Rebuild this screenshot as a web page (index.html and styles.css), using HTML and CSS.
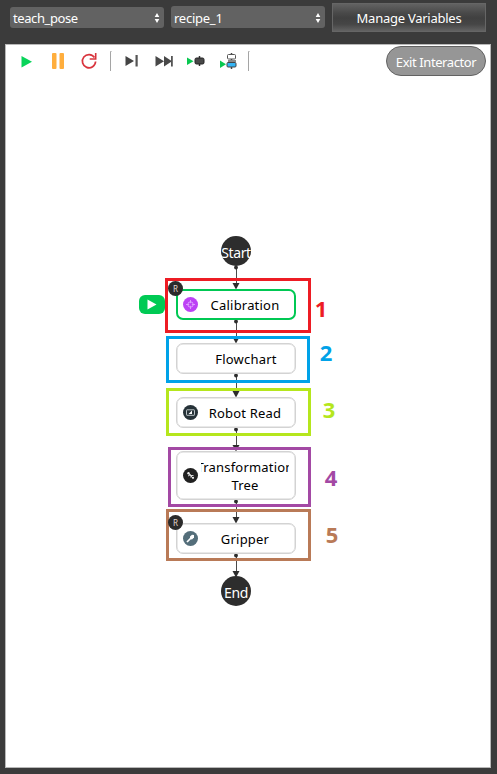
FILE: index.html
```html
<!DOCTYPE html>
<html lang="en">
<head>
<meta charset="utf-8">
<title>Interactor</title>
<link rel="stylesheet" href="styles.css">
</head>
<body>
<header class="topbar">
  <div class="select select-task"><span>teach_pose</span><svg width="6" height="10" viewBox="0 0 6 10"><path d="M3 0L5.3 4H.7zM3 10L.7 6h4.6z"/></svg></div>
  <div class="select select-recipe"><span>recipe_1</span><svg width="6" height="10" viewBox="0 0 6 10"><path d="M3 0L5.3 4H.7zM3 10L.7 6h4.6z"/></svg></div>
  <button class="manage">Manage Variables</button>
</header>
<main class="workspace">
  <div class="toolbar">
    <svg class="tools" width="250" height="30" viewBox="0 46 250 30">
      <path d="M21.500 56v11.500l10.500-5.700z" fill="#08d45a"/>
      <rect x="52" y="53" width="4.500" height="16" rx="1" fill="#ffae3d"/><rect x="59.500" y="53" width="4.500" height="16" rx="1" fill="#ffae3d"/>
      <path d="M94.500 57.500A6.600 6.600 0 1 0 95.600 61.500" fill="none" stroke="#d9343d" stroke-width="1.700"/>
      <path d="M95.700 53v6h-6" fill="none" stroke="#d9343d" stroke-width="1.600"/>
      <path d="M110.500 71V51.500h1" fill="none" stroke="#a5a5a5"/>
      <path d="M125.500 56v10l8.500-5z" fill="#444"/><rect x="135.500" y="55" width="2.200" height="11.500" fill="#555"/>
      <path d="M155.500 56v10.500l8.500-5.300zM164 56v10.500l8-5.300z" fill="#484848"/><rect x="171" y="56" width="1.800" height="10.500" fill="#555"/>
      <path d="M187 57.500v7.500l6.500-3.700z" fill="#08c850"/>
      <path d="M199.500 56v10" stroke="#333" stroke-width="1.500"/><rect x="195" y="58" width="9" height="6" rx="1.500" fill="#484848" stroke="#222"/>
      <path d="M220 60.500v7.500l6-3.700z" fill="#08c850"/>
      <path d="M231.500 53v16" stroke="#444" stroke-width="1.500"/>
      <rect x="227.500" y="54.500" width="8" height="4.500" rx="1" fill="#fff" stroke="#555"/>
      <path d="M228 61h8" stroke="#888" stroke-width="2"/>
      <rect x="227" y="62.500" width="9" height="4.500" rx="1" fill="#35b4f4" stroke="#444"/>
      <path d="M248.500 71V51.500h1" fill="none" stroke="#a5a5a5"/>
    </svg>
    <button class="exit">Exit Interactor</button>
  </div>
  <div class="diagram">
    <svg class="wires" width="497" height="774" viewBox="0 0 497 774">
      <defs>
        <g id="head"><path d="M-3.500-6.500h7L0 0z"/></g>
      </defs>
      <path d="M236.500 266v20M236.500 321v20M236.500 375v20M236.500 429v20M236.500 501v20M236.500 555v20" stroke="#4a4a4a"/>
      <g fill="#2d2d2d">
        <use href="#head" x="236" y="289.500"/><use href="#head" x="236" y="343.500"/><use href="#head" x="236" y="397.500"/><use href="#head" x="236" y="451.500"/><use href="#head" x="236" y="523.500"/><use href="#head" x="236" y="577.500"/>
        <circle cx="236" cy="267.500" r="1.900"/><circle cx="236" cy="321.500" r="1.900"/><circle cx="236" cy="375.500" r="1.900"/><circle cx="236" cy="429.500" r="1.900"/><circle cx="236" cy="501.500" r="1.900"/><circle cx="236" cy="555.500" r="1.900"/>
      </g>
    </svg>
    <div class="terminal start"><span>Start</span></div>
    <div class="terminal end"><span>End</span></div>

    <div class="run"><svg width="26" height="19" viewBox="0 0 26 19"><path d="M8.500 4.500v10l9-5z" fill="#fff"/></svg></div>

    <div class="node calibration">
      <svg class="icon" width="15" height="15" viewBox="0 0 15 15"><circle cx="7.500" cy="7.500" r="7.500" fill="#bd42f5"/><g fill="none" stroke="#e0a5ff" stroke-width=".9"><circle cx="7.500" cy="7.500" r="2.700"/><path d="M7.500 3v3.200M7.500 8.800V12M3 7.500h3.200M8.800 7.500H12"/></g></svg>
      <span class="label">Calibration</span>
    </div>
    <div class="node flowchart"><span class="label">Flowchart</span></div>
    <div class="node robot">
      <svg class="icon" width="15" height="15" viewBox="0 0 15 15"><circle cx="7.500" cy="7.500" r="7.500" fill="#263238"/><rect x="3.500" y="4.800" width="8" height="5.500" rx=".5" fill="none" stroke="#b8c0c4"/><path d="M5.500 9L9 5.500V9z" fill="#fff"/></svg>
      <span class="label">Robot Read</span>
    </div>
    <div class="node transformation">
      <svg class="icon" width="15" height="15" viewBox="0 0 15 15"><circle cx="7.500" cy="7.500" r="7.500" fill="#212121"/><path d="M5.500 5.500l4.500 4.500M5 8l3-1.500M8 9.800V7.500h2.500" fill="none" stroke="#d8d8d8"/><g fill="#eee"><circle cx="5.500" cy="5.200" r="1.200"/><circle cx="10" cy="9.800" r="1.100"/></g></svg>
      <span class="label"><span class="clipped"><span>Transformation</span></span>Tree</span>
    </div>
    <div class="node gripper">
      <svg class="icon" width="15" height="15" viewBox="0 0 15 15"><circle cx="7.500" cy="7.500" r="7.500" fill="#546e7a"/><path d="M4 11l4-4" stroke="#fff" stroke-width="1.700"/><path d="M7 5.500L9 3.800l2 .3v2.400L9 8.500 7 8z" fill="#fff"/></svg>
      <span class="label">Gripper</span>
    </div>
    <div class="frame frame-1"></div><div class="frame frame-2"></div><div class="frame frame-3"></div><div class="frame frame-4"></div><div class="frame frame-5"></div>
    <div class="badge badge-top">R</div><div class="badge badge-bottom">R</div>
    <div class="number number-1">1</div><div class="number number-2">2</div><div class="number number-3">3</div><div class="number number-4">4</div><div class="number number-5">5</div>
  </div>
</main>
</body>
</html>
```
FILE: styles.css
```css
* { box-sizing: border-box; }
body {
  margin: 0;
  height: 774px;
  overflow: hidden;
  display: flex;
  flex-direction: column;
  background: #3b3b3b;
  font: 13px/18px "Noto Sans", "Open Sans", sans-serif;
}
button { font: inherit; padding: 0; color: #fff; }
.topbar { height: 44px; display: flex; gap: 7px; padding: 3px 11px 0 10px; align-items: flex-start; }
.select {
  width: 154px;
  display: flex;
  align-items: center;
  justify-content: space-between;
  padding: 0 4px 0 3px;
  border-radius: 3px;
  background: #626262;
  color: #fff;
  letter-spacing: -.4px;
}
.select svg { fill: #fff; }
.select-task { height: 21px; margin-top: 4px; }
.select-recipe { height: 22px; margin-top: 3px; padding-top: 1px; letter-spacing: -.25px; }
.manage {
  width: 154px;
  height: 29px;
  border: 1px solid #666;
  letter-spacing: -.25px;
  background: linear-gradient(#626262, #484848 35%, #404040 52%, #464646 75%, #626262);
}
.workspace {
  position: relative;
  width: 486px;
  height: 724px;
  margin-left: 5px;
  border: 1px solid #b8b8b8;
  background: #fff;
}
.toolbar { display: flex; justify-content: space-between; margin: 1px 4px 0 -6px; }
.exit { width: 100px; height: 30px; padding-top: 2px; border: 1px solid #626262; border-radius: 15px; background: #969696; letter-spacing: -.42px; }
.diagram { position: absolute; left: -6px; top: -45px; width: 497px; height: 774px; pointer-events: none; }
.wires { position: absolute; inset: 0; }
.terminal {
  position: absolute;
  left: 221px;
  width: 30px;
  height: 30px;
  display: flex;
  justify-content: center;
  border-radius: 50%;
  background: #2d2d2d;
  color: #fff;
  font-size: 14px;
  line-height: 33px;
}
.start { top: 236px; letter-spacing: -.4px; }
.end { top: 576px; letter-spacing: -.3px; }
.run { position: absolute; left: 139px; top: 295px; width: 26px; height: 19px; border-radius: 6px; background: #00ca54; }
.run svg { display: block; }
.node {
  position: absolute;
  left: 176px;
  width: 120px;
  height: 31px;
  display: flex;
  align-items: center;
  border: 1px solid #d3d3d3;
  box-shadow: inset 0 0 0 .5px #d3d3d3;
  border-radius: 7px;
  background: #fff;
  color: #000;
  letter-spacing: .2px;
}
.icon { position: absolute; left: 6px; }
.label { width: 88px; margin-left: 25px; padding-top: 1px; text-align: center; }
.calibration { top: 289px; border: 2px solid #00c853; box-shadow: none; }
.calibration .icon { left: 5px; }
.calibration .label { margin-left: 23px; }
.flowchart { top: 343px; }
.robot { top: 397px; }
.robot .label, .gripper .label { margin-left: 24px; }
.transformation { top: 451px; height: 49px; }
.gripper { top: 523px; }
.clipped { display: flex; justify-content: center; width: 88px; overflow: hidden; white-space: nowrap; }
.transformation .label { margin-left: 24px; }
.frame { position: absolute; border: 3px solid; }
.frame-1 { left: 165px; top: 278px; width: 146px; height: 55px; color: #ed1c24; }
.frame-2 { left: 166px; top: 336px; width: 144px; height: 47px; color: #00a2e8; }
.frame-3 { left: 166px; top: 388px; width: 145px; height: 48px; color: #b5e61d; }
.frame-4 { left: 168px; top: 447px; width: 143px; height: 60px; color: #a349a4; }
.frame-5 { left: 166px; top: 509px; width: 145px; height: 52px; color: #b97a57; }
.badge {
  position: absolute;
  left: 168px;
  width: 15px;
  height: 15px;
  border-radius: 50%;
  background: #2b2b2b;
  color: #e3d8cf;
  font-size: 8px;
  line-height: 16px;
  text-align: center;
}
.badge-top { top: 281px; }
.badge-bottom { top: 515px; }
.number { position: absolute; width: 14px; text-align: center; font: 700 22px/24px "Open Sans", "Noto Sans", sans-serif; }
.number-1 { left: 314px; top: 296px; color: #ed1c24; }
.number-2 { left: 319px; top: 340px; color: #00a2e8; }
.number-3 { left: 322px; top: 397px; color: #b5e61d; }
.number-4 { left: 324px; top: 465px; color: #a349a4; }
.number-5 { left: 325px; top: 522px; color: #b97a57; }
```
